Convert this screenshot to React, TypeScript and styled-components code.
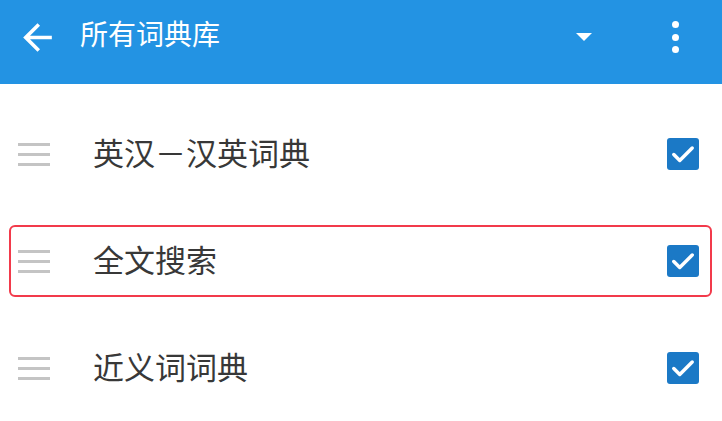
import React from 'react'
import { createGlobalStyle, styled } from 'styled-components'

const GlobalStyle = createGlobalStyle`
  html, body {
    margin: 0;
    padding: 0;
    background: #ffffff;
  }
  body {
    font-family: "Noto Sans CJK SC", "Noto Sans", Roboto, sans-serif;
  }
`

const Screen = styled.div`
  width: 722px;
  height: 421px;
  overflow: hidden;
  background: #ffffff;
`

const Toolbar = styled.header`
  height: 84px;
  box-sizing: border-box;
  padding-bottom: 10px;
  display: flex;
  align-items: center;
  background: #2393e3;
  color: #ffffff;
`

const BackButton = styled.button`
  width: 43px;
  height: 43px;
  margin-left: 16px;
  padding: 0;
  border: none;
  background: none;
  display: flex;
  color: #ffffff;
`

const Title = styled.h1`
  margin: 0 0 8px 21px;
  flex: 1;
  font-size: 28px;
  font-weight: 400;
  line-height: 1;
  letter-spacing: 0;
`

const DropdownCaret = styled.span`
  width: 0;
  height: 0;
  border-left: 8px solid transparent;
  border-right: 8px solid transparent;
  border-top: 8px solid #ffffff;
  margin-right: 80px;
`

const MoreButton = styled.span`
  display: flex;
  flex-direction: column;
  gap: 5.5px;
  margin-right: 43px;
`

const Dot = styled.i`
  width: 7px;
  height: 7px;
  border-radius: 50%;
  background: #ffffff;
`

const List = styled.ul`
  list-style: none;
  margin: 0;
  padding: 16px 0 0;
`

const Row = styled.li`
  height: 107px;
  display: flex;
  align-items: center;
  padding: 0 10px 0 9px;
`

const Item = styled.div<{ $selected?: boolean }>`
  flex: 1;
  height: 72px;
  box-sizing: border-box;
  display: flex;
  align-items: center;
  padding: 0 11px 0 7px;
  border: 2px solid ${(p) => (p.$selected ? '#f23a4b' : 'transparent')};
  border-radius: 6px;
`

const DragHandle = styled.span`
  width: 32px;
  display: flex;
  flex-direction: column;
  gap: 7px;
  margin-top: 1px;

  &::before,
  &::after,
  & > i {
    content: '';
    display: block;
    height: 3px;
    background: #c4c4c4;
  }
`

const Label = styled.span`
  flex: 1;
  margin-left: 43px;
  margin-bottom: 4px;
  font-size: 31px;
  line-height: 1;
  color: #383838;
`

const Check = styled.span`
  width: 32px;
  height: 32px;
  border-radius: 3px;
  background: #1b79c6;
  display: flex;
  align-items: center;
  justify-content: center;
`

const dictionaries = [
  { name: '英汉－汉英词典', selected: false },
  { name: '全文搜索', selected: true },
  { name: '近义词词典', selected: false },
]

export default function App() {
  return (
    <>
      <GlobalStyle />
      <Screen>
        <Toolbar>
          <BackButton aria-label="返回">
            <svg width="43" height="43" viewBox="0 0 24 24" fill="currentColor">
              <path d="M20 11H7.83l5.59-5.59L12 4l-8 8 8 8 1.41-1.41L7.83 13H20v-2z" />
            </svg>
          </BackButton>
          <Title>所有词典库</Title>
          <DropdownCaret />
          <MoreButton>
            <Dot />
            <Dot />
            <Dot />
          </MoreButton>
        </Toolbar>
        <List>
          {dictionaries.map((d) => (
            <Row key={d.name}>
              <Item $selected={d.selected}>
                <DragHandle>
                  <i />
                </DragHandle>
                <Label>{d.name}</Label>
                <Check>
                  <svg width="26" height="26" viewBox="0 0 24 24" fill="none">
                    <path
                      d="M3.5 12.5l5.5 5.5L20.5 6.5"
                      stroke="#ffffff"
                      strokeWidth="3.2"
                      strokeLinecap="round"
                      strokeLinejoin="round"
                    />
                  </svg>
                </Check>
              </Item>
            </Row>
          ))}
        </List>
      </Screen>
    </>
  )
}
